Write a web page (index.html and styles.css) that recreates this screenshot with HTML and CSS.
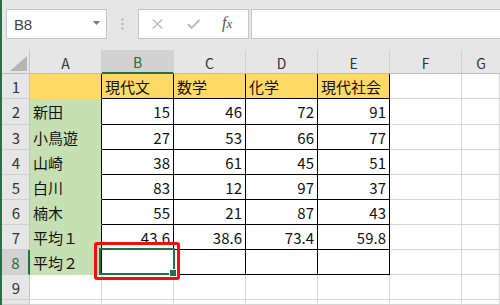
FILE: index.html
```html
<!DOCTYPE html>
<html lang="ja">
<head>
<meta charset="utf-8">
<title>Excel</title>
<link rel="stylesheet" href="styles.css">
</head>
<body>
<div class="app">
  <div class="toolbar">
    <div class="namebox">
      <span class="ref">B8</span>
      <svg class="arrow" width="7" height="4" viewBox="0 0 7 4"><polygon points="0,0 7,0 3.5,4" fill="#7a7a7a"/></svg>
    </div>
    <div class="sep">
      <svg width="3" height="12" viewBox="0 0 3 12"><circle cx="1.5" cy="1.5" r="1.1" fill="#a8a8a8"/><circle cx="1.5" cy="6" r="1.1" fill="#a8a8a8"/><circle cx="1.5" cy="10.5" r="1.1" fill="#a8a8a8"/></svg>
    </div>
    <div class="fxbox">
      <svg class="ico-x" width="11" height="10" viewBox="0 0 11 10"><path d="M0.7 0.6 L10.3 9.4 M10.3 0.6 L0.7 9.4" stroke="#b8b8b8" stroke-width="1.3" fill="none"/></svg>
      <svg class="ico-ok" width="13" height="10" viewBox="0 0 13 10"><path d="M0.8 5.2 L4.6 8.8 L12.4 1.0" stroke="#b8b8b8" stroke-width="1.9" fill="none"/></svg>
      <span class="fx">f<span class="fxx">x</span></span>
    </div>
    <div class="formula"></div>
  </div>

  <div class="sheet">
    <div class="corner"><svg width="17" height="15" viewBox="0 0 17 15"><polygon points="17,0 17,15 0,15" fill="#b4b4b4"/></svg></div>
    <div class="ch">A</div>
    <div class="ch sel">B</div>
    <div class="ch">C</div>
    <div class="ch">D</div>
    <div class="ch">E</div>
    <div class="ch">F</div>
    <div class="ch last">G</div>

    <div class="rh">1</div>
    <div class="c a gold"></div>
    <div class="c t gold">現代文</div>
    <div class="c t gold">数学</div>
    <div class="c t gold">化学</div>
    <div class="c t gold">現代社会</div>
    <div class="c g"></div>
    <div class="c g"></div>

    <div class="rh">2</div>
    <div class="c a green">新田</div>
    <div class="c t num">15</div>
    <div class="c t num">46</div>
    <div class="c t num">72</div>
    <div class="c t num">91</div>
    <div class="c g"></div>
    <div class="c g"></div>

    <div class="rh">3</div>
    <div class="c a green">小鳥遊</div>
    <div class="c t num">27</div>
    <div class="c t num">53</div>
    <div class="c t num">66</div>
    <div class="c t num">77</div>
    <div class="c g"></div>
    <div class="c g"></div>

    <div class="rh">4</div>
    <div class="c a green">山崎</div>
    <div class="c t num">38</div>
    <div class="c t num">61</div>
    <div class="c t num">45</div>
    <div class="c t num">51</div>
    <div class="c g"></div>
    <div class="c g"></div>

    <div class="rh">5</div>
    <div class="c a green">白川</div>
    <div class="c t num">83</div>
    <div class="c t num">12</div>
    <div class="c t num">97</div>
    <div class="c t num">37</div>
    <div class="c g"></div>
    <div class="c g"></div>

    <div class="rh">6</div>
    <div class="c a green">楠木</div>
    <div class="c t num">55</div>
    <div class="c t num">21</div>
    <div class="c t num">87</div>
    <div class="c t num">43</div>
    <div class="c g"></div>
    <div class="c g"></div>

    <div class="rh">7</div>
    <div class="c a green">平均１</div>
    <div class="c t num">43.6</div>
    <div class="c t num">38.6</div>
    <div class="c t num">73.4</div>
    <div class="c t num">59.8</div>
    <div class="c g"></div>
    <div class="c g"></div>

    <div class="rh sel">8</div>
    <div class="c a green">平均２</div>
    <div class="c t"></div>
    <div class="c t"></div>
    <div class="c t"></div>
    <div class="c t"></div>
    <div class="c g"></div>
    <div class="c g"></div>

    <div class="rh">9</div>
    <div class="c g"></div>
    <div class="c g"></div>
    <div class="c g"></div>
    <div class="c g"></div>
    <div class="c g"></div>
    <div class="c g"></div>
    <div class="c g"></div>

    <div class="rh"></div>
    <div class="c g"></div>
    <div class="c g"></div>
    <div class="c g"></div>
    <div class="c g"></div>
    <div class="c g"></div>
    <div class="c g"></div>
    <div class="c g"></div>
  </div>

  <div class="selection"><div class="handle"></div></div>
  <div class="highlight"></div>
</div>
</body>
</html>
```

FILE: styles.css
```css
* { box-sizing: border-box; }

html, body {
  margin: 0;
  padding: 0;
  width: 500px;
  height: 305px;
  overflow: hidden;
  background: #ffffff;
}

.app {
  position: relative;
  width: 500px;
  height: 305px;
  border-left: 2px solid #217346;
  overflow: hidden;
  font-family: "Noto Sans CJK JP", sans-serif;
}

/* ---------- formula bar ---------- */
.toolbar {
  height: 50px;
  background: #e6e6e6;
  display: flex;
  align-items: flex-start;
  padding: 9px 0 0 4px;
}

.namebox {
  width: 101px;
  height: 30px;
  background: #fff;
  border: 1px solid #c6c6c6;
  display: flex;
  align-items: center;
  justify-content: space-between;
  padding: 0 6px 0 7px;
}

.ref {
  font-family: "Liberation Sans", Arial, sans-serif;
  font-size: 15px;
  color: #444;
  letter-spacing: -0.3px;
  padding-top: 1px;
}

.arrow { margin-top: -2px; }

.sep {
  width: 31px;
  height: 30px;
  display: flex;
  align-items: center;
  justify-content: center;
  padding-bottom: 1px;
}

.fxbox {
  width: 111px;
  height: 30px;
  background: #fff;
  border: 1px solid #c6c6c6;
  display: flex;
  align-items: center;
  padding-left: 13px;
}

.ico-x { margin-top: -1px; }
.ico-ok { margin-left: 24px; margin-top: -1px; }

.fx {
  margin-left: 22px;
  font-family: "Liberation Serif", "Times New Roman", serif;
  font-style: italic;
  font-size: 16px;
  color: #555;
  line-height: 1;
  margin-top: -3px;
}
.fxx { font-size: 13px; }

.formula {
  flex: 1;
  margin-left: 2px;
  height: 30px;
  background: #fff;
  border: 1px solid #c6c6c6;
  border-right: none;
}

/* ---------- sheet grid ---------- */
.sheet {
  display: grid;
  grid-template-columns: 28px repeat(6, 72px) 1fr;
  grid-template-rows: 24px 25px 26px repeat(7, 25px) 1fr;
  height: 255px;
}

.corner {
  background: #e6e6e6;
  border-right: 1px solid #c6c6c6;
  border-bottom: 1px solid #bdbdbd;
  display: flex;
  align-items: flex-end;
  justify-content: flex-end;
  padding: 0 2px 2px 0;
}

.ch {
  background: #e6e6e6;
  border-right: 1px solid #cfcfcf;
  border-bottom: 1px solid #bdbdbd;
  display: flex;
  align-items: center;
  justify-content: center;
  font-size: 14px;
  color: #333;
  padding-top: 2px;
}
.ch.last { border-right: none; }
.ch.sel {
  background: #d2d2d2;
  border-bottom: 2px solid #217346;
  color: #1e6b41;
}

.rh {
  background: #e6e6e6;
  border-right: 1px solid #c6c6c6;
  border-bottom: 1px solid #cfcfcf;
  display: flex;
  align-items: center;
  justify-content: center;
  font-size: 15px;
  color: #333;
  padding-left: 1px;
}
.rh.sel {
  background: #d2d2d2;
  border-right: 2px solid #217346;
  color: #1e6b41;
}

.c {
  display: flex;
  align-items: center;
  font-size: 15px;
  color: #111;
  white-space: nowrap;
  overflow: hidden;
  padding: 0 3px;
}

.g {
  border-right: 1px solid #d4d4d4;
  border-bottom: 1px solid #d4d4d4;
}

.a {
  border-right: 1px solid #000;
}
.a.gold { background: #ffd966; border-bottom: 1px solid #ffd966; }
.a.green { background: #c6e0b4; border-bottom: 1px solid #c6e0b4; }

.t {
  border-right: 1px solid #000;
  border-bottom: 1px solid #000;
}
.t.gold { background: #ffd966; }
.num { justify-content: flex-end; }

/* ---------- overlays ---------- */
.selection {
  position: absolute;
  left: 97px;
  top: 248px;
  width: 76px;
  height: 27px;
  border: 2px solid #217346;
}

.handle {
  position: absolute;
  right: -4px;
  bottom: -4px;
  width: 8px;
  height: 8px;
  background: #217346;
  border: 1px solid #fff;
}

.highlight {
  position: absolute;
  left: 92px;
  top: 242px;
  width: 86px;
  height: 38px;
  border: 3px solid #f01010;
  border-radius: 3px;
}
```
